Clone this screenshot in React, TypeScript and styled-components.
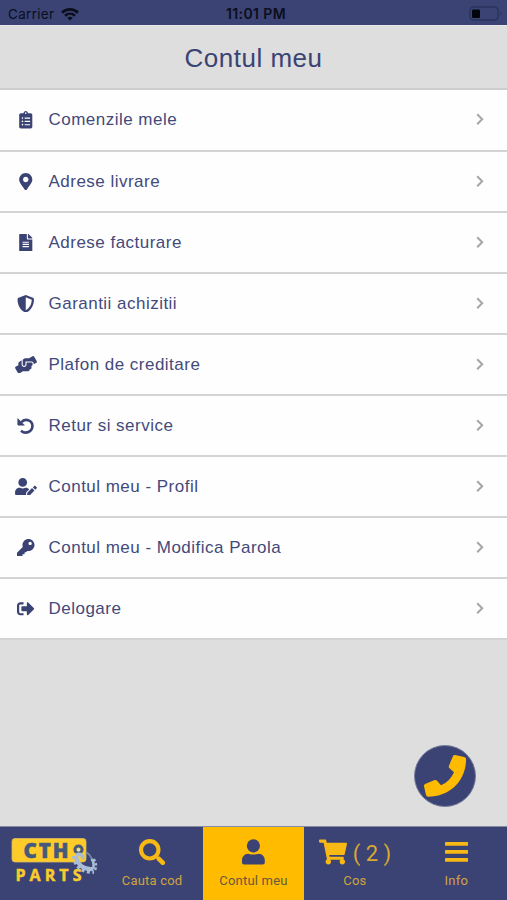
import React from 'react';
import styled, { createGlobalStyle } from 'styled-components';
import {
  FaClipboardList, FaMapMarkerAlt, FaFileAlt, FaShieldAlt, FaHandsHelping,
  FaUserEdit, FaKey, FaSignOutAlt, FaSearch, FaShoppingCart,
} from 'react-icons/fa';

const navy = '#3a4374';
const yellow = '#ffbb00';

const GlobalStyle = createGlobalStyle`
  * { box-sizing: border-box; }
  body { margin: 0; background: #dedede; }
`;

const Screen = styled.div`
  position: relative;
  width: 507px;
  height: 900px;
  display: flex;
  flex-direction: column;
  overflow: hidden;
  background: #dedede;
  color: ${navy};
  font-family: "Liberation Sans", Arial, sans-serif;
`;

const StatusBar = styled.div`
  height: 25px;
  flex: none;
  display: grid;
  grid-template-columns: 1fr auto 1fr;
  align-items: center;
  padding: 3px 5px 0 8px;
  background: ${navy};
  color: #0b0e1c;
  font-family: Inter, sans-serif;
  font-size: 13.5px;
  line-height: 20px;
`;

const Carrier = styled.div`
  display: flex;
  align-items: center;
  gap: 7px;
  letter-spacing: 0.3px;
`;

const Clock = styled.div`
  font-weight: 600;
  font-size: 14px;
  letter-spacing: 0.4px;
  margin-left: 2px;
`;

const Battery = styled.svg`
  justify-self: end;
`;

const Header = styled.header`
  height: 65px;
  flex: none;
  display: flex;
  align-items: center;
  justify-content: center;
  border-top: 1px solid #e8e8ea;
  border-bottom: 2px solid #cdcdcd;
`;

const Title = styled.h1`
  margin: 2px 0 0;
  font-size: 26px;
  font-weight: 400;
  line-height: 32px;
  letter-spacing: 0.5px;
`;

const Menu = styled.nav`
  flex: none;
  background: #fefefe;
`;

const MenuRow = styled.div`
  height: 61px;
  display: grid;
  grid-template-columns: 22px 1fr 12px;
  column-gap: 11.5px;
  align-items: center;
  padding: 0 21px 0 15px;
  border-bottom: 2px solid #d4d4d4;

  &:first-child { height: 62px; }
`;

const MenuIcon = styled.span<{ $wide?: boolean }>`
  display: flex;
  justify-content: center;

  svg {
    width: ${p => (p.$wide ? 22 : 17.5)}px;
    height: 17.5px;
    flex: none;
  }
`;

const MenuLabel = styled.span`
  font-size: 17px;
  line-height: 20px;
  letter-spacing: 0.48px;
  color: #434a7b;
`;

const CallButton = styled.button`
  position: absolute;
  left: 414px;
  top: 745px;
  width: 62px;
  height: 62px;
  display: flex;
  align-items: center;
  justify-content: center;
  padding: 0;
  border: 1px solid #777d9b;
  border-radius: 50%;
  background: ${navy};
  color: ${yellow};

  svg { flex: none; }
`;

const TabBar = styled.footer`
  height: 74px;
  flex: none;
  margin-top: auto;
  display: grid;
  grid-template-columns: repeat(5, 1fr);
  border-top: 1px solid #858aa5;
  background: ${navy};
`;

const Tab = styled.div<{ $active?: boolean }>`
  display: flex;
  flex-direction: column;
  align-items: center;
  padding-top: 11px;
  background: ${p => (p.$active ? yellow : navy)};
  color: ${p => (p.$active ? navy : '#f8b914')};
`;

const TabIcon = styled.div`
  height: 28px;
  display: flex;
  align-items: center;
  gap: 6px;
  font-size: 26.5px;
`;

const TabLabel = styled.span<{ $active?: boolean }>`
  margin-top: 6px;
  font-family: Roboto, sans-serif;
  font-size: 13px;
  line-height: 17px;
  letter-spacing: 0.2px;
  color: ${p => (p.$active ? '#66593f' : '#d1a33d')};
`;

const Count = styled.span`
  font-family: Roboto, sans-serif;
  font-size: 22px;
  line-height: 28px;
  color: #dda82f;
  padding-top: 3px;
`;

const LogoCell = styled.div`
  display: flex;
`;

const UndoIcon = () => (
  <svg viewBox="0 0 18 18">
    <path d="M4.6 5.2C8 1.2 15.6 2.8 15.9 9c0 6.4-7.2 9-11.8 5.1" fill="none" stroke="currentColor" strokeWidth="2.7" />
    <path d="M0.8 1.6v6.2q0 .6.6.6h6.2z" fill="currentColor" stroke="currentColor" strokeLinejoin="round" strokeWidth=".6" />
  </svg>
);

const PhoneIcon = () => (
  <svg width="46" height="46" viewBox="0 0 46 46" fill="currentColor">
    <path d="M33.200 2l8.900 1.900q2 .4 2 2.400C43.700 28.500 28 43.200 6.200 43.800q-1.800 0-2.200-1.800l-2-8.800q-.3-1.600 1.200-2.300l9.400-3.800q1.400-.5 2.400.6l4 4.600C25.200 29.500 29.500 25 32 19.200l-4.500-3.900q-1.200-1-.6-2.400l4-9.700q.6-1.500 2.300-1.200z" />
  </svg>
);

const PersonIcon = () => (
  <svg width="24" height="27" viewBox="0 0 24 27" fill="currentColor">
    <circle cx="12.400" cy="6.800" r="6.600" />
    <path d="M7.200 14.700q5.200 1.800 10.400 0c3.800.2 6.200 2.900 6.200 6.500v2.300q0 2-2 2H3q-2 0-2-2v-2.300c0-3.600 2.400-6.300 6.200-6.500z" />
  </svg>
);

const BarsIcon = () => (
  <svg width="23" height="20" viewBox="0 0 23 20" fill="currentColor">
    <rect width="23" height="3.7" rx=".5" />
    <rect y="8" width="23" height="3.7" rx=".5" />
    <rect y="16" width="23" height="3.7" rx=".5" />
  </svg>
);

const items: { icon: React.ComponentType; label: string; wide?: boolean }[] = [
  { icon: FaClipboardList, label: 'Comenzile mele' },
  { icon: FaMapMarkerAlt, label: 'Adrese livrare' },
  { icon: FaFileAlt, label: 'Adrese facturare' },
  { icon: FaShieldAlt, label: 'Garantii achizitii' },
  { icon: FaHandsHelping, label: 'Plafon de creditare', wide: true },
  { icon: UndoIcon, label: 'Retur si service' },
  { icon: FaUserEdit, label: 'Contul meu - Profil', wide: true },
  { icon: FaKey, label: 'Contul meu - Modifica Parola' },
  { icon: FaSignOutAlt, label: 'Delogare' },
];

const Wifi = () => (
  <svg width="18" height="13" viewBox="0 0 18 13" fill="none" stroke="#0b0e1c" strokeWidth="2.6">
    <path d="M1 4.7C5.5 0.3 12.5 0.3 17 4.7" />
    <path d="M4 7.8c2.9-2.7 7.1-2.7 10 0" />
    <path d="M6.3 9.8C7.9 8.4 10.1 8.4 11.7 9.8L9 12.6Z" fill="#0b0e1c" stroke="none" />
  </svg>
);

const Chevron = () => (
  <svg width="12" height="14" viewBox="0 0 12 14" fill="none" stroke="#a6a6a6" strokeWidth="2">
    <path d="M3.2 1.2l5 5-5 5" />
  </svg>
);

const Logo = () => (
  <svg width="101" height="73" viewBox="0 0 101 73">
    <rect x="12" y="11.5" width="74" height="23.5" rx="3" fill="#fecb28" stroke="#d5ba67" strokeWidth="0.8" />
    <text x="23.5" y="30.700" fontFamily="Open Sans, sans-serif" fontWeight="800" fontSize="20.5"
      textLength="45" fill="#46597b" stroke="#46597b" strokeWidth="0.5">CTH</text>
    <text x="15.5" y="54" fontFamily="Open Sans, sans-serif" fontWeight="700" fontSize="16"
      textLength="66" fill="#f8cc2c" stroke="#f8cc2c" strokeWidth="0.5">PARTS</text>
    <g fill="none">
      <circle cx="78.5" cy="22.5" r="3.6" stroke="#46597b" strokeWidth="3" />
      <circle cx="78.5" cy="23" r="1.5" fill="#dbe2d8" />
      <path d="M76 28c5-2 8 1 6 4" stroke="#a9bed6" strokeWidth="3.5" />
      <path d="M76 29C77 37 83 43 93 42" stroke="#a9bed6" strokeWidth="4.2" />
      <path d="M73.7 29C74.5 39 82 46 94 45" stroke="#a9bed6" strokeWidth="3.6" strokeDasharray="3 2.5" />
      <path d="M86 25c5 3 7 8 7 14" stroke="#7187aa" strokeWidth="1.8" />
      <path d="M91.5 32q3.5 4 1.5 10" stroke="#a9bed6" strokeWidth="2.5" />
      <path d="M93.5 32q4 5 1.5 11" stroke="#a9bed6" strokeWidth="2.5" strokeDasharray="2.5 2" />
    </g>
  </svg>
);

export default function App() {
  return (
    <Screen>
      <GlobalStyle />
      <StatusBar>
        <Carrier>Carrier <Wifi /></Carrier>
        <Clock>11:01 PM</Clock>
        <Battery width="34" height="16" viewBox="0 0 34 16">
          <rect x="2" y="1" width="28" height="13" rx="3.5" fill="none" stroke="#29345f" strokeWidth="1.5" />
          <rect x="4" y="3.5" width="8" height="8.5" rx="1.3" fill="#03050c" />
          <path d="M32 5.5c1.7.9 1.7 3.3 0 4.2z" fill="#29345f" />
        </Battery>
      </StatusBar>
      <Header><Title>Contul meu</Title></Header>
      <Menu>
        {items.map(({ icon: Icon, label, wide }) => (
          <MenuRow key={label}>
            <MenuIcon $wide={wide}><Icon /></MenuIcon>
            <MenuLabel>{label}</MenuLabel>
            <Chevron />
          </MenuRow>
        ))}
      </Menu>
      <CallButton aria-label="Telefon"><PhoneIcon /></CallButton>
      <TabBar>
        <LogoCell><Logo /></LogoCell>
        <Tab>
          <TabIcon><FaSearch /></TabIcon>
          <TabLabel>Cauta cod</TabLabel>
        </Tab>
        <Tab $active>
          <TabIcon><PersonIcon /></TabIcon>
          <TabLabel $active>Contul meu</TabLabel>
        </Tab>
        <Tab>
          <TabIcon><FaShoppingCart size={28} /><Count>( 2 )</Count></TabIcon>
          <TabLabel>Cos</TabLabel>
        </Tab>
        <Tab>
          <TabIcon><BarsIcon /></TabIcon>
          <TabLabel>Info</TabLabel>
        </Tab>
      </TabBar>
    </Screen>
  );
}
